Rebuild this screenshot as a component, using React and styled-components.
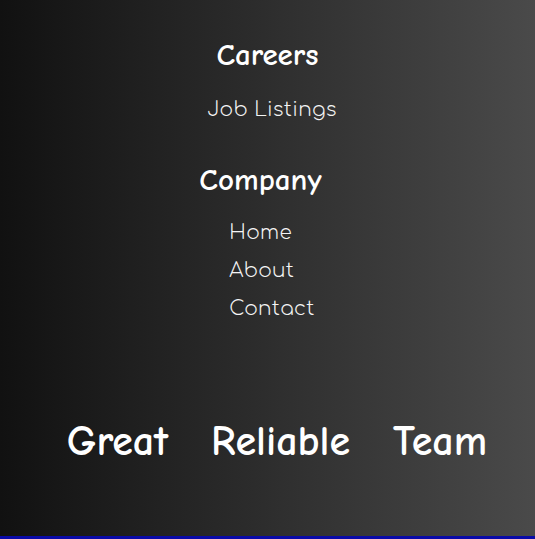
import React from "react";
import styled, { createGlobalStyle } from "styled-components";

const Global = createGlobalStyle`
  html, body { margin: 0; padding: 0; background: #0a0aa8; }
  #root { min-height: 100vh; }
`;

const Footer = styled.footer`
  box-sizing: border-box;
  height: 536px;
  background: linear-gradient(to right, #111111, #4a4a4a);
  color: #ffffff;
  display: flex;
  flex-direction: column;
  align-items: center;
  padding-top: 35px;
`;

const Column = styled.section`
  display: flex;
  flex-direction: column;
  align-items: ${(p) => (p.$start ? "flex-start" : "center")};
  margin-right: ${(p) => p.$pull || 0}px;
  margin-bottom: ${(p) => p.$after || 0}px;
`;

const Heading = styled.h3`
  margin: 0;
  font-family: "Comic Neue", "Comic Sans MS", "DejaVu Sans", sans-serif;
  font-weight: 700;
  font-size: 31px;
  line-height: 40px;
`;

const List = styled.ul`
  list-style: none;
  margin: ${(p) => p.$top}px 0 0 ${(p) => p.$nudge || 0}px;
  padding: 0 0 0 ${(p) => p.$indent || 0}px;
  display: flex;
  flex-direction: column;
  align-items: flex-start;
`;

const Item = styled.li`
  font-family: "Comfortaa", "Inter", "Noto Sans", sans-serif;
  font-weight: 300;
  font-size: 20px;
  line-height: 38px;
  color: #f4f4f4;
  letter-spacing: 0.3px;
`;

const Tagline = styled.div`
  margin-top: 89px;
  margin-left: 19px;
  display: flex;
  gap: 43px;
  font-family: "Comic Neue", "Comic Sans MS", "DejaVu Sans", sans-serif;
  font-weight: 700;
  font-size: 42px;
  line-height: 50px;
`;

export default function App() {
  return (
    <>
      <Global />
      <Footer>
        <Column $after={31}>
          <Heading>Careers</Heading>
          <List $top={16} $nudge={9}>
            <Item>Job Listings</Item>
          </List>
        </Column>
        <Column $start $pull={14}>
          <Heading>Company</Heading>
          <List $top={14} $indent={30}>
            <Item>Home</Item>
            <Item>About</Item>
            <Item>Contact</Item>
          </List>
        </Column>
        <Tagline>
          <span>Great</span>
          <span>Reliable</span>
          <span>Team</span>
        </Tagline>
      </Footer>
    </>
  );
}
